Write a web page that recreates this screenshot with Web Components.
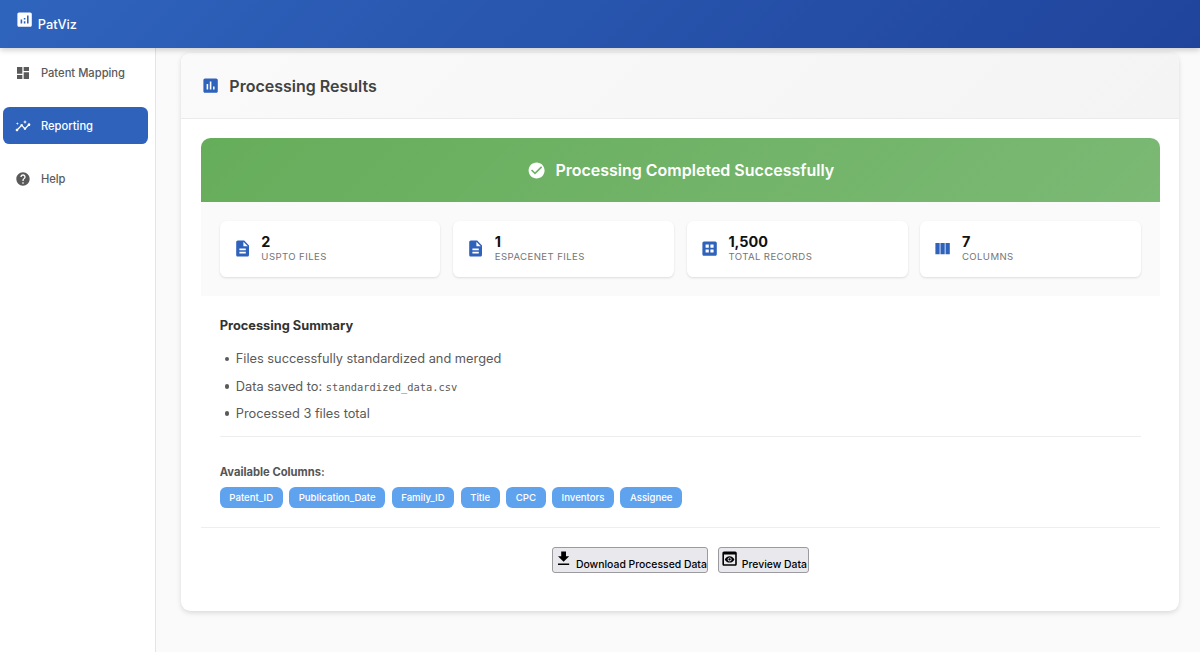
<!DOCTYPE html>
<html lang="en">
<head>
<meta charset="utf-8">
<title>PatViz</title>
<style>
  body {
    margin: 0;
    height: 652px;
    overflow: hidden;
    background: #fafafa;
    font-family: Inter, "Liberation Sans", sans-serif;
    font-size: 12.8px;
  }
</style>
</head>
<body>
<pv-app>
  <pv-header slot="header">PatViz</pv-header>
  <pv-nav-item slot="nav" icon="dashboard">Patent Mapping</pv-nav-item>
  <pv-nav-item slot="nav" icon="insights" active>Reporting</pv-nav-item>
  <pv-nav-item slot="nav" icon="help">Help</pv-nav-item>

  <pv-card heading="Processing Results">
    <pv-banner>Processing Completed Successfully</pv-banner>
    <pv-stats>
      <pv-stat icon="description" value="2">USPTO Files</pv-stat>
      <pv-stat icon="description" value="1">Espacenet Files</pv-stat>
      <pv-stat icon="dataset" value="1,500">Total Records</pv-stat>
      <pv-stat icon="column" value="7">Columns</pv-stat>
    </pv-stats>
    <pv-summary heading="Processing Summary"></pv-summary>
    <pv-columns heading="Available Columns:">
      <pv-chip>Patent_ID</pv-chip>
      <pv-chip>Publication_Date</pv-chip>
      <pv-chip>Family_ID</pv-chip>
      <pv-chip>Title</pv-chip>
      <pv-chip>CPC</pv-chip>
      <pv-chip>Inventors</pv-chip>
      <pv-chip>Assignee</pv-chip>
    </pv-columns>
    <pv-actions>
      <pv-button icon="download">Download Processed Data</pv-button>
      <pv-button icon="preview">Preview Data</pv-button>
    </pv-actions>
  </pv-card>
</pv-app>

<script>
const ICONS = {
  analytics: "M19 3H5c-1.1 0-2 .9-2 2v14c0 1.1.9 2 2 2h14c1.1 0 2-.9 2-2V5c0-1.1-.9-2-2-2zM9 17H7v-5h2v5zm4 0h-2v-3h2v3zm0-5h-2v-2h2v2zm4 5h-2V7h2v10z",
  assessment: "M19 3H5c-1.1 0-2 .9-2 2v14c0 1.1.9 2 2 2h14c1.1 0 2-.9 2-2V5c0-1.1-.9-2-2-2zM9 17H7v-7h2v7zm4 0h-2V7h2v10zm4 0h-2v-4h2v4z",
  dashboard: "M3 13h8V3H3v10zm0 8h8v-6H3v6zm10 0h8V11h-8v10zm0-18v6h8V3h-8z",
  insights: "M21 8c-1.45 0-2.26 1.44-1.93 2.51l-3.55 3.56c-.3-.09-.74-.09-1.04 0l-2.55-2.55C12.27 10.45 11.46 9 10 9c-1.45 0-2.27 1.44-1.93 2.52l-4.56 4.55C2.44 15.74 1 16.55 1 18c0 1.1.9 2 2 2 1.45 0 2.26-1.44 1.93-2.51l4.55-4.56c.3.09.74.09 1.04 0l2.55 2.55C12.73 16.55 13.54 18 15 18c1.45 0 2.27-1.44 1.93-2.52l3.56-3.55C21.56 12.26 23 11.45 23 10c0-1.1-.9-2-2-2zM15 9l.94-2.07L18 6l-2.06-.93L15 3l-.92 2.07L12 6l2.08.93zM3.5 11L4 9l2-.5L4 8l-.5-2L3 8l-2 .5L3 9z",
  help: "M12 2C6.48 2 2 6.48 2 12s4.48 10 10 10 10-4.48 10-10S17.52 2 12 2zm1 17h-2v-2h2v2zm2.07-7.75l-.9.92C13.45 12.9 13 13.5 13 15h-2v-.5c0-1.1.45-2.1 1.17-2.83l1.24-1.26c.37-.36.59-.86.59-1.41 0-1.1-.9-2-2-2s-2 .9-2 2H8c0-2.21 1.79-4 4-4s4 1.79 4 4c0 .88-.36 1.68-.93 2.25z",
  check: "M12 2C6.48 2 2 6.48 2 12s4.48 10 10 10 10-4.48 10-10S17.52 2 12 2zm-2 15l-5-5 1.41-1.41L10 14.17l7.59-7.59L19 8l-9 9z",
  description: "M14 2H6c-1.1 0-1.99.9-1.99 2L4 20c0 1.1.89 2 1.99 2H18c1.1 0 2-.9 2-2V8l-6-6zm2 16H8v-2h8v2zm0-4H8v-2h8v2zm-3-5V3.5L18.5 9H13z",
  dataset: "M19 3H5c-1.1 0-2 .9-2 2v14c0 1.1.9 2 2 2h14c1.1 0 2-.9 2-2V5c0-1.1-.9-2-2-2zm-8 14H7v-4h4v4zm0-6H7V7h4v4zm6 6h-4v-4h4v4zm0-6h-4V7h4v4z",
  column: "M14.67 5v14H9.33V5h5.34zm1 14H21V5h-5.33v14zm-7.34 0V5H3v14h5.33z",
  download: "M19 9h-4V3H9v6H5l7 7 7-7zM5 18v2h14v-2H5z",
  preview: "M19 3H5c-1.11 0-2 .9-2 2v14c0 1.1.89 2 2 2h14c1.1 0 2-.9 2-2V5c0-1.1-.89-2-2-2zm0 16H5V7h14v12zm-5.5-6c0 .83-.67 1.5-1.5 1.5s-1.5-.67-1.5-1.5.67-1.5 1.5-1.5 1.5.67 1.5 1.5zM12 9c-2.73 0-5.06 1.66-6 4 .94 2.34 3.27 4 6 4s5.06-1.66 6-4c-.94-2.34-3.27-4-6-4zm0 6.5c-1.38 0-2.5-1.12-2.5-2.5s1.12-2.5 2.5-2.5 2.5 1.12 2.5 2.5-1.12 2.5-2.5 2.5z"
};

class PvElement extends HTMLElement {
  constructor() {
    super();
    this.attachShadow({ mode: "open" });
  }

  connectedCallback() {
    this.shadowRoot.innerHTML = `
    <style>${this.constructor.styles}</style>
    ${this.render()}`;
  }
}

class PvIcon extends PvElement {
  static get styles() {
    return /* css */`
      :host {
        display: inline-block;
        flex: none;
        width: var(--icon-size, 19.2px);
        height: var(--icon-size, 19.2px);
      }
      svg { display: block; width: 100%; height: 100%; fill: currentColor; }
    `;
  }

  render() {
    return `<svg viewBox="0 0 24 24"><path d="${ICONS[this.getAttribute("name")]}"/></svg>`;
  }
}

class PvApp extends PvElement {
  static get styles() {
    return /* css */`
      :host { display: flex; flex-direction: column; height: 652px; }
      .body { display: flex; flex: 1; min-height: 0; }
      nav {
        box-sizing: border-box;
        width: 156px;
        padding: 6.4px 6.8px 0 2.5px;
        border-right: 1px solid #e4e4e4;
        background: #fff;
        display: flex;
        flex-direction: column;
        gap: 16px;
      }
      main { flex: 1; padding: 5.8px 20.6px 0 25.4px; }
    `;
  }

  render() {
    return /* html */`
      <slot name="header"></slot>
      <div class="body">
        <nav><slot name="nav"></slot></nav>
        <main><slot></slot></main>
      </div>`;
  }
}

class PvHeader extends PvElement {
  static get styles() {
    return /* css */`
      :host {
        box-sizing: border-box;
        display: flex;
        gap: 3.2px;
        height: 47.6px;
        flex: none;
        padding: 9.6px 15.4px 0;
        background: linear-gradient(135deg, #2f64bd, #20449c);
        color: #fff;
        font-size: 12.8px;
        font-weight: 500;
        position: relative;
        z-index: 2;
        box-shadow: 0 1.5px 6px rgba(0, 0, 0, 0.2);
      }
      span { line-height: 17px; margin-top: 6.4px; }
    `;
  }

  render() {
    return /* html */`<pv-icon name="analytics"></pv-icon><span><slot></slot></span>`;
  }
}

class PvNavItem extends PvElement {
  static get styles() {
    return /* css */`
      :host {
        --icon-size: 16px;

        box-sizing: border-box;
        display: flex;
        align-items: center;
        gap: 9.6px;
        height: 37.1px;
        padding: 0 12.8px;
        border-radius: 6.4px;
        color: #5a5a5a;
        font-size: 11.2px;
        font-weight: 500;
        white-space: nowrap;
      }
      :host([active]) { background: #2e62bb; color: #fff; }
    `;
  }

  render() {
    return /* html */`<pv-icon name="${this.getAttribute("icon")}"></pv-icon><span><slot></slot></span>`;
  }
}

class PvCard extends PvElement {
  static get styles() {
    return /* css */`
      :host {
        box-sizing: border-box;
        display: block;
        height: 557.2px;
        border-radius: 9.6px;
        background: #fff;
        box-shadow: 0 1.6px 5px rgba(0, 0, 0, 0.13);
        overflow: hidden;
      }
      header {
        box-sizing: border-box;
        display: flex;
        align-items: center;
        gap: 9.6px;
        height: 65.6px;
        padding: 0 19.2px;
        background: linear-gradient(135deg, #fafafa, #f4f4f4);
        border-bottom: 1px solid #ebebeb;
      }
      pv-icon { color: #2e62bb; }
      h2 { margin: 0; font-size: 16px; font-weight: 600; color: #424242; }
      .content { padding: 19.4px 19.2px 0; }
    `;
  }

  render() {
    return /* html */`
      <header><pv-icon name="assessment"></pv-icon><h2>${this.getAttribute("heading")}</h2></header>
      <div class="content"><slot></slot></div>`;
  }
}

class PvBanner extends PvElement {
  static get styles() {
    return /* css */`
      :host {
        display: flex;
        align-items: center;
        justify-content: center;
        gap: 9.6px;
        height: 63.8px;
        border-radius: 9.6px 9.6px 0 0;
        background: linear-gradient(135deg, #66ad5b, #7bb974);
        color: #fff;
        font-size: 16px;
        font-weight: 600;
      }
    `;
  }

  render() {
    return /* html */`<pv-icon name="check"></pv-icon><span><slot></slot></span>`;
  }
}

class PvStats extends PvElement {
  static get styles() {
    return /* css */`
      :host {
        display: grid;
        grid-template-columns: repeat(4, 1fr);
        gap: 12.8px;
        padding: 19.2px;
        background: #fafafa;
      }
    `;
  }

  render() {
    return "<slot></slot>";
  }
}

class PvStat extends PvElement {
  static get styles() {
    return /* css */`
      :host {
        box-sizing: border-box;
        display: flex;
        align-items: center;
        gap: 9.6px;
        height: 55.2px;
        padding: 0 12.8px;
        border-radius: 6.4px;
        background: #fff;
        box-shadow: 0 1px 2.4px rgba(0, 0, 0, 0.12);
      }
      pv-icon { color: #2e62bb; }
      .value { font-size: 14.4px; line-height: 15px; font-weight: 700; color: #111; }
      .label {
        padding-top: 1px;
        font-size: 9.6px;
        line-height: 14px;
        letter-spacing: 0.4px;
        text-transform: uppercase;
        color: #757575;
      }
    `;
  }

  render() {
    return /* html */`
      <pv-icon name="${this.getAttribute("icon")}"></pv-icon>
      <div>
        <div class="value">${this.getAttribute("value")}</div>
        <div class="label"><slot></slot></div>
      </div>`;
  }
}

class PvSummary extends PvElement {
  static get styles() {
    return /* css */`
      :host {
        display: block;
        height: 140.3px;
        margin: 0 19.2px;
        border-bottom: 1px solid #eee;
        overflow: hidden;
      }
      h3 { margin: 20px 0 13.6px; font-size: 12.8px; line-height: 20px; font-weight: 700; color: #333; }
      ul { margin: 0; padding: 0 0 0 16px; list-style: none; color: #5a5a5a; font-size: 12.8px; line-height: 20.8px; }
      li { height: 20.8px; margin-bottom: 6.4px; }
      li::before {
        content: "";
        display: inline-block;
        width: 4.4px;
        height: 4.4px;
        margin: 0 6.4px 2px -10.8px;
        border-radius: 50%;
        background: currentColor;
      }
      code { font-family: "DejaVu Sans Mono", monospace; font-size: 10.4px; }
    `;
  }

  render() {
    return /* html */`
      <h3>${this.getAttribute("heading")}</h3>
      <ul>
        <li>Files successfully standardized and merged</li>
        <li>Data saved to: <code>standardized_data.csv</code></li>
        <li>Processed 3 files total</li>
      </ul>`;
  }
}

class PvColumns extends PvElement {
  static get styles() {
    return /* css */`
      :host {
        display: block;
        height: 89.9px;
        padding: 0 19.2px;
        border-bottom: 1px solid #eee;
        overflow: hidden;
      }
      h4 { margin: 26.6px 0 5.3px; font-size: 11.2px; line-height: 17.6px; font-weight: 700; color: #555; }
      div { display: flex; gap: 6.4px; }
    `;
  }

  render() {
    return /* html */`<h4>${this.getAttribute("heading")}</h4><div><slot></slot></div>`;
  }
}

class PvChip extends PvElement {
  static get styles() {
    return /* css */`
      :host {
        padding: 0 9.6px;
        height: 21.4px;
        line-height: 21.4px;
        border-radius: 6.4px;
        background: #5fa3ef;
        color: #fff;
        font-size: 9.6px;
        font-weight: 500;
      }
    `;
  }

  render() {
    return "<slot></slot>";
  }
}

class PvActions extends PvElement {
  static get styles() {
    return /* css */`
      :host { display: flex; justify-content: center; gap: 9.6px; padding-top: 19.2px; }
    `;
  }

  render() {
    return "<slot></slot>";
  }
}

class PvButton extends PvElement {
  static get styles() {
    return /* css */`
      button {
        box-sizing: border-box;
        display: flex;
        gap: 3px;
        height: 25.4px;
        padding: 1px 0.6px 0;
        border: 1px solid #9a9a9f;
        border-radius: 3px;
        background: #e9e9ed;
        color: #000;
        font: 500 10.4px Inter, "Liberation Sans", sans-serif;
        white-space: nowrap;
      }
      span { line-height: 14px; margin-top: 9px; }
    `;
  }

  render() {
    return /* html */`<button><pv-icon name="${this.getAttribute("icon")}"></pv-icon><span><slot></slot></span></button>`;
  }
}

customElements.define("pv-icon", PvIcon);
customElements.define("pv-app", PvApp);
customElements.define("pv-header", PvHeader);
customElements.define("pv-nav-item", PvNavItem);
customElements.define("pv-card", PvCard);
customElements.define("pv-banner", PvBanner);
customElements.define("pv-stats", PvStats);
customElements.define("pv-stat", PvStat);
customElements.define("pv-summary", PvSummary);
customElements.define("pv-columns", PvColumns);
customElements.define("pv-chip", PvChip);
customElements.define("pv-actions", PvActions);
customElements.define("pv-button", PvButton);
</script>
</body>
</html>
